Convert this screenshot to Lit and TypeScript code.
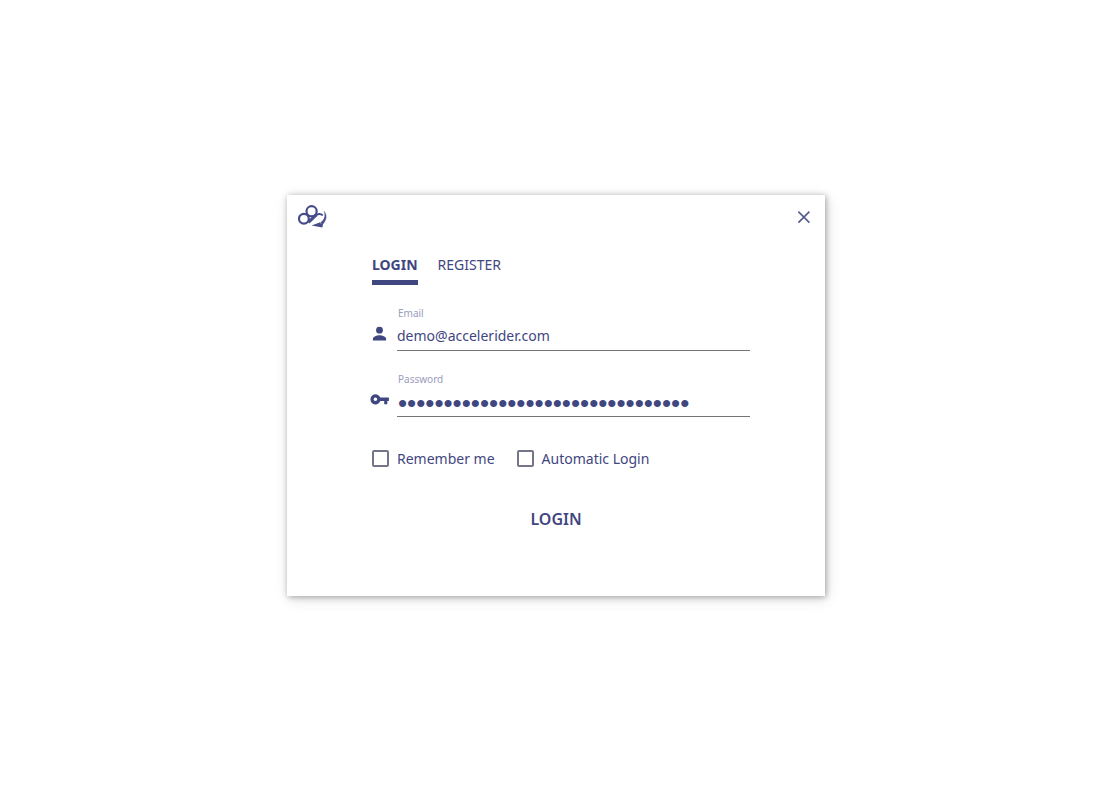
import { LitElement, html, css } from "lit";
import { customElement, state } from "lit/decorators.js";

@customElement("app-root")
export class AppRoot extends LitElement {
  static styles = css`
    :host {
      display: flex;
      box-sizing: border-box;
      min-height: 100vh;
      align-items: center;
      justify-content: center;
      padding: 16px 16px 20px;
      background: #fff;
      color: #3f4680;
      font-family: "Noto Sans", "Open Sans", sans-serif;
      font-size: 14px;
      line-height: 20px;
    }
    * {
      box-sizing: border-box;
    }
    button,
    input {
      font: inherit;
      color: inherit;
      margin: 0;
      padding: 0;
      border: 0;
      background: none;
      outline: none;
    }
    button {
      cursor: pointer;
    }
    svg {
      display: block;
    }
    .card {
      width: 100%;
      max-width: 538px;
      background: #fff;
      box-shadow: 1px 1px 6px rgba(0, 0, 0, 0.32), 2px 3px 14px rgba(0, 0, 0, 0.12);
    }
    .bar {
      display: flex;
      justify-content: space-between;
      align-items: center;
      padding: 10px 14px 0 11px;
    }
    .body {
      padding: 26px 75px 63px 83px;
    }
    .tabs {
      display: flex;
      gap: 20px;
      padding-left: 2px;
    }
    .tab {
      padding-bottom: 5px;
      border-bottom: 5px solid transparent;
    }
    .tab.active {
      font-weight: 700;
      border-bottom-color: #3f4680;
    }
    .field {
      display: grid;
      grid-template-columns: 19px 1fr;
      column-gap: 8px;
      align-items: center;
      padding-top: 20px;
    }
    .field svg {
      margin-bottom: 4px;
    }
    .field label {
      grid-column: 2;
      padding-left: 1px;
      font-size: 10px;
      line-height: 16px;
      color: #9a9dbd;
    }
    .field input {
      width: 100%;
      height: 30px;
      border-bottom: 1px solid #737378;
    }
    .field input[type="password"] {
      font-family: "Liberation Sans", sans-serif;
      font-size: 26px;
      padding: 3px 0 0 1px;
    }
    .options {
      display: flex;
      gap: 22px;
      padding: 32px 0 0 2px;
    }
    .option {
      display: flex;
      align-items: center;
      gap: 8px;
    }
    .option input {
      appearance: none;
      width: 17px;
      height: 17px;
      margin-bottom: 2px;
      border: 2px solid #75758a;
      border-radius: 2px;
    }
    .option input:checked {
      background: #3f4680;
      box-shadow: inset 0 0 0 2px #fff;
    }
    .actions {
      display: flex;
      justify-content: center;
      padding: 36px 8px 0 0;
    }
    .submit {
      padding: 2px 12px;
      font-size: 16px;
      line-height: 24px;
      font-weight: 600;
    }
  `;

  @state() private mode = "login";

  private tab(id: string, label: string) {
    return html`<button
      type="button"
      role="tab"
      aria-selected=${this.mode === id ? "true" : "false"}
      class="tab ${this.mode === id ? "active" : ""}"
      @click=${() => (this.mode = id)}
    >${label}</button>`;
  }

  render() {
    return html`
      <main class="card">
        <header class="bar">
          <svg width="30" height="24" viewBox="0 0 30 24" fill="none" stroke="#464c88" stroke-width="2.2" aria-label="Accelerider">
            <circle cx="5.9" cy="13.7" r="4.9" />
            <circle cx="13.6" cy="6.3" r="5.1" />
            <path d="M10.4 17.4 18 10.2" stroke-width="3" />
            <path d="M17.4 10.8C19.4 8.6 22.6 8.2 24.8 10.4" stroke-width="2" />
            <path d="M26.2 6.4C29.2 10.4 28.8 14.6 24.6 19.4L22.6 17.8C26.6 14.4 27.8 10.8 26.2 6.4Z" fill="#464c88" stroke="#464c88" stroke-width=".4" />
            <path d="M13.6 20.6 22.2 17.2 22.6 18.6 25 19 24.4 22.6Z" fill="#464c88" stroke="none" />
          </svg>
          <button class="close" type="button" aria-label="Close">
            <svg width="14" height="14" viewBox="0 0 14 14" stroke="#545b8a" stroke-width="1.6">
              <path d="M1.4 1.6 12.4 12.6M12.4 1.6 1.4 12.6" />
            </svg>
          </button>
        </header>
        <form class="body" @submit=${(e: Event) => e.preventDefault()}>
          <div class="tabs" role="tablist">
            ${this.tab("login", "LOGIN")}${this.tab("register", "REGISTER")}
          </div>
          <div class="field">
            <label for="email">Email</label>
            <svg width="19" height="20" viewBox="0 0 19 20" fill="#3f4680">
              <circle cx="9.5" cy="6.2" r="3.4" />
              <path d="M2.9 16.5V14.8C2.9 12.5 7.2 11.2 9.5 11.2S16.1 12.5 16.1 14.8V16.5Z" />
            </svg>
            <input id="email" type="text" .value=${"demo@accelerider.com"} />
          </div>
          <div class="field">
            <label for="password">Password</label>
            <svg width="19" height="20" viewBox="0 0 19 20" fill="#3f4680">
              <path fill-rule="evenodd" d="M10.3 7.6A5.1 5.1 0 1 0 10.3 11H14.2V14.3H17.3V11H18.9V7.6ZM5.4 7.5A1.8 1.8 0 1 1 5.4 11.1A1.8 1.8 0 1 1 5.4 7.5Z" />
            </svg>
            <input id="password" type="password" .value=${"x".repeat(32)} />
          </div>
          <div class="options">
            <label class="option"><input type="checkbox" />Remember me</label>
            <label class="option"><input type="checkbox" />Automatic Login</label>
          </div>
          <div class="actions">
            <button class="submit" type="submit">LOGIN</button>
          </div>
        </form>
      </main>
    `;
  }
}
